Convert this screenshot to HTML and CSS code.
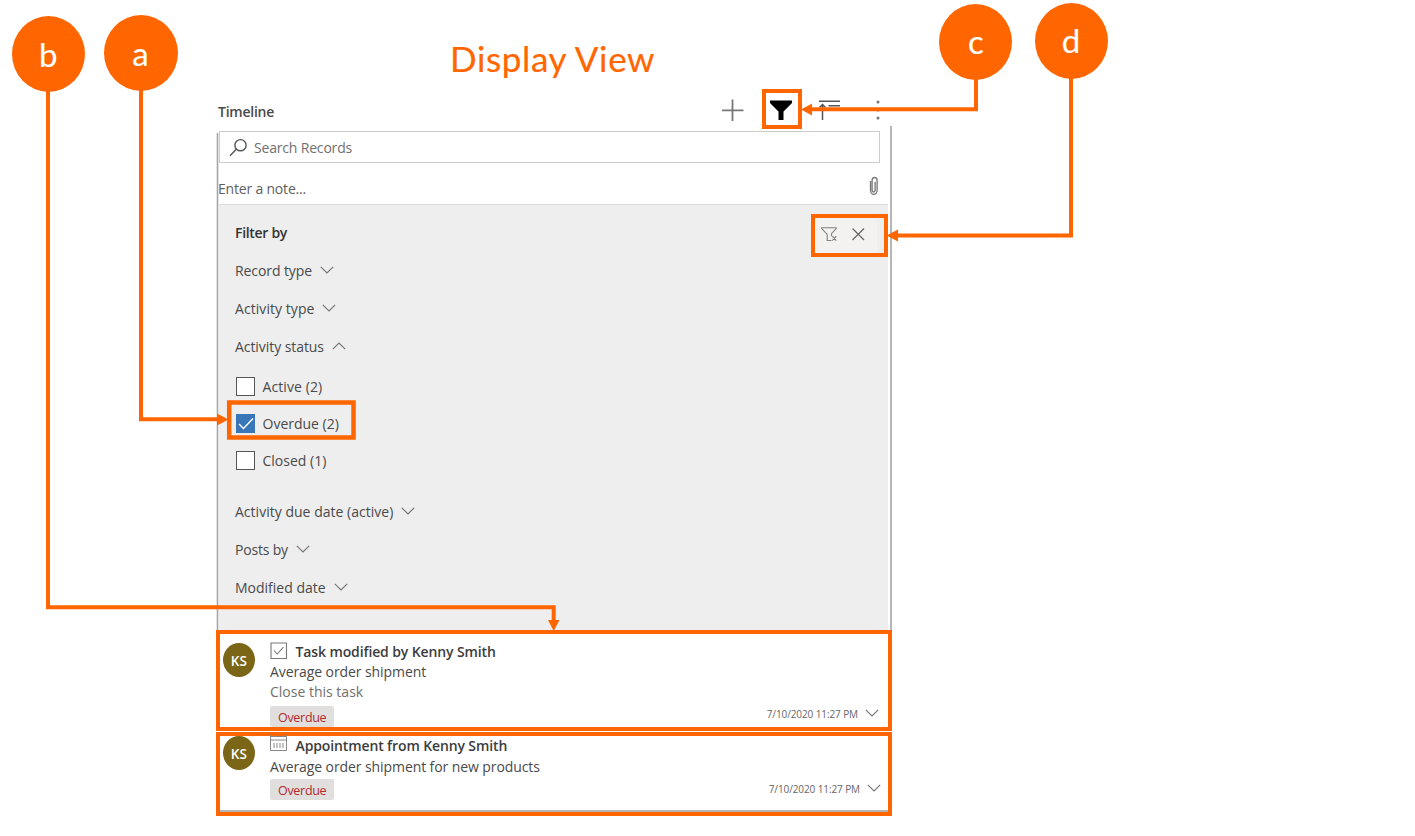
FILE: index.html
```html
<!DOCTYPE html>
<html lang="en">
<head>
<meta charset="utf-8">
<title>Display View</title>
<link rel="stylesheet" href="styles.css">
</head>
<body>
<svg class="defs" width="0" height="0">
  <symbol id="chev" viewBox="0 0 14 8"><path d="M.8 .8 7 7 13.200 .8" fill="none" stroke="#777" stroke-width="1.200"/></symbol>
</svg>
<h1 class="heading">Display View</h1>
<main class="timeline">
  <header class="toolbar">
    <span class="name">Timeline</span>
    <svg class="tools" width="170" height="30" viewBox="715 95 170 30">
      <path d="M732.500 99.500v21.500M722 110.300h21.500" stroke="#777" stroke-width="1.800"/>
      <path d="M770 100.500h22v2.500l-8.500 8.500v8.500h-5v-8.500l-8.500-8.500z" fill="#000"/>
      <path d="M819 101.300h21M828.500 105.700h11.500M822.500 104.500v15.500M819.500 107.500l3-3 3 3" fill="none" stroke="#555" stroke-width="1.500"/>
      <g fill="#777"><circle cx="878" cy="102" r="1.500"/><circle cx="878" cy="110" r="1.500"/><circle cx="878" cy="118" r="1.500"/></g>
    </svg>
  </header>
  <div class="search">
    <svg width="20" height="20" viewBox="229 137 20 20"><g fill="none" stroke="#555" stroke-width="1.400"><circle cx="240.500" cy="145.200" r="5.600"/><path d="M236.300 149.300l-6.300 6.500"/></g></svg>
    <span>Search Records</span>
  </div>
  <div class="note"><span>Enter a note...</span>
    <svg width="12" height="20" viewBox="868 176 12 20"><path d="M870.500 181v9a3.200 4.300 0 0 0 6.600 0v-9.500a2.500 3 0 0 0-5 0v9.500a1.500 2 0 0 0 3 0v-8" fill="none" stroke="#777" stroke-width="1.300"/></svg>
  </div>
  <section class="filter">
    <div class="row head"><span>Filter by</span>
      <div class="actions"><svg width="62" height="35" viewBox="815 218 62 35"><path d="M831.500 240.500h-4.300v-6l-5.500-6v-.8h14.500v.8l-4.700 5.200v2.500M832.300 236.200l4 4.500M836.300 236.200l-4 4.500" fill="none" stroke="#808080" stroke-width="1.100"/><path d="M852.500 228.500l11.500 11.500M864 228.500l-11.500 11.500" stroke="#666" stroke-width="1.200"/></svg></div>
    </div>
    <div class="row"><span class="record">Record type</span><svg class="chev"><use href="#chev"/></svg></div>
    <div class="row"><span class="activity">Activity type</span><svg class="chev"><use href="#chev"/></svg></div>
    <div class="row"><span class="status">Activity status</span><svg class="chev up"><use href="#chev"/></svg></div>
    <div class="checks">
      <div class="check"><i class="box"></i><span class="active">Active (2)</span></div>
      <div class="check"><i class="box on"><svg width="19" height="19"><path d="M3 10l4.500 4.500L17 4.500" fill="none" stroke="#fff" stroke-width="1.400"/></svg></i><span>Overdue (2)</span></div>
      <div class="check"><i class="box"></i><span>Closed (1)</span></div>
    </div>
    <div class="row"><span class="due">Activity due date (active)</span><svg class="chev"><use href="#chev"/></svg></div>
    <div class="row"><span class="posts">Posts by</span><svg class="chev"><use href="#chev"/></svg></div>
    <div class="row"><span>Modified date</span><svg class="chev"><use href="#chev"/></svg></div>
  </section>
  <article class="card first">
    <div class="avatar">KS</div>
    <div class="body">
      <div class="title"><svg width="18" height="18"><path d="M1 1h15.500v15.500h-15.500zM4 8.500l3.200 3.500 6.300-7" fill="none" stroke="#777" stroke-width="1.100"/></svg><span>Task modified by Kenny Smith</span></div>
      <div class="line">Average order shipment</div>
      <div class="line light">Close this task</div>
      <div class="badge">Overdue</div>
    </div>
    <div class="date"><span>7/10/2020 11:27 PM</span><svg class="chev"><use href="#chev"/></svg></div>
  </article>
  <article class="card second">
    <div class="avatar">KS</div>
    <div class="body">
      <div class="title"><svg width="18" height="18"><path d="M.5 0v15.500h16V0M.5 5h16M.5 1.500h16M4 8v5M7 8v5M10 8v5M13 8v5" fill="none" stroke="#888"/></svg><span>Appointment from Kenny Smith</span></div>
      <div class="line">Average order shipment for new products</div>
      <div class="badge">Overdue</div>
    </div>
    <div class="date"><span>7/10/2020 11:27 PM</span><svg class="chev"><use href="#chev"/></svg></div>
  </article>
</main>
<svg class="callouts" width="1415" height="836">
  <path d="M217.500 133v497M891 126v504" stroke="#a6a6a6" stroke-width="1.600"/>
  <g fill="none" stroke="#f60" stroke-width="4">
    <path d="M48 80v527.300h505.700v16M141 80v339.300h80M976 70v39.300H810M1071 70v165.500H896"/>
    <path d="M764 91h36v36h-36zM813 216h73v39h-73z"/>
    <path d="M229.200 402.500h124.300v35H229.200z" stroke-width="4.500"/>
  </g>
  <g fill="#f60">
    <path d="M548 620h11.500l-5.800 11zM217 413.500v12l11.500-6zM812 103.500v12l-11-6zM898 229.500v12l-11.500-6z"/>
    <ellipse cx="48.500" cy="54" rx="36.500" ry="38"/><ellipse cx="141" cy="53" rx="37" ry="38"/>
    <ellipse cx="975.500" cy="42" rx="36.500" ry="38"/><ellipse cx="1071.500" cy="41" rx="36.500" ry="38"/>
  </g>
  <g class="letters"><text x="48.300" y="67">b</text><text x="140.500" y="66">a</text><text x="976" y="54">c</text><text x="1071" y="53">d</text></g>
</svg>
</body>
</html>
```
FILE: styles.css
```css
* { box-sizing: border-box; }
body { margin: 0; width: 1415px; height: 836px; background: #fff; overflow: hidden; position: relative; font: 14px/20px "Open Sans", "Noto Sans", sans-serif; color: #4a4a4a; }
svg { display: block; flex: none; }
span, .line { white-space: nowrap; }
.defs { position: absolute; }
.heading { margin: 0; padding: 36px 0 0 450px; height: 95px; font: 400 35px/44px Lato, sans-serif; letter-spacing: .65px; color: #f60; -webkit-text-stroke: .2px #f60; }
.timeline { width: 676px; margin-left: 216px; }
.toolbar { height: 36px; display: flex; justify-content: space-between; padding: 0 7px 0 2px; }
.name { line-height: 33px; font-weight: 600; letter-spacing: -.25px; color: #4a4a4a; }
.search { margin: 0 12px 0 3px; height: 32px; border: 1px solid #ccc; display: flex; align-items: center; gap: 5px; padding-left: 9px; color: #707070; letter-spacing: -.18px; }
.search span { padding-top: 2px; }
.note { height: 41px; display: flex; align-items: center; justify-content: space-between; padding: 10px 12px 0 2px; color: #606060; letter-spacing: -.19px; }
.note svg { margin-top: -6px; }
.filter { margin: 0 4px 0 3px; height: 426px; padding: 9px 0 0 16px; background: #eee; border-top: 1px solid #ddd; }
.row { height: 38px; display: flex; align-items: center; gap: 8px; }
.head { justify-content: space-between; font-weight: 600; color: #333; letter-spacing: -.31px; }
.record { letter-spacing: -.09px; }
.activity { letter-spacing: .06px; }
.status { letter-spacing: -.064px; }
.active { letter-spacing: .1px; }
.due { letter-spacing: .02px; }
.posts { letter-spacing: -.18px; }
.actions { margin-right: 11px; margin-top: 5px; background: #f3f2f1; }
.chev { width: 14px; height: 8px; margin-top: -3px; }
.up { transform: scaleY(-1); }
.checks { padding: 2px 0 14px 1px; }
.check { height: 37px; display: flex; align-items: center; gap: 7.500px; }
.box { width: 19px; height: 19px; border: 1px solid #555; background: #fff; }
.on { border: 0; background: #3876b8; }
.card { border: 4px solid #f60; display: flex; background: #fff; }
.first { height: 101px; margin-bottom: 1px; padding-top: 8px; }
.second { height: 84px; box-shadow: inset 0 -2px #b5b5b5; }
.avatar { width: 32px; height: 34px; margin: 1px 15px 0 3px; border-radius: 50%; background: #7a6616; color: #fff; font-size: 13.500px; font-weight: 600; line-height: 36px; letter-spacing: .2px; text-align: center; }
.title { height: 20px; display: flex; gap: 7.500px; color: #3c3c3c; font-weight: 600; letter-spacing: -.12px; }
.line { height: 20px; letter-spacing: -.088px; }
.light { color: #707070; letter-spacing: 0; }
.badge { width: 64px; height: 21px; margin-top: 4px; padding-left: 8px; line-height: 23px; font-size: 12.500px; letter-spacing: -.3px; border-radius: 2px; background: #e1dfdd; color: #b3282d; }
.date { margin: auto 9px 3px auto; display: flex; align-items: center; gap: 7px; height: 20px; font-size: 10px; letter-spacing: -.1px; color: #666; }
.second .title svg { margin-top: -1px; }
.second .title span { line-height: 19px; }
.second .line { margin-top: 1px; }
.second .badge { margin-top: 2px; }
.second .avatar { margin-top: 0; }
.second .date { margin: auto 7px 13px auto; }
.callouts { position: absolute; left: 0; top: 0; }
.letters { font: 33px Lato, sans-serif; fill: #fff; stroke: #fff; stroke-width: .15px; text-anchor: middle; }
```
